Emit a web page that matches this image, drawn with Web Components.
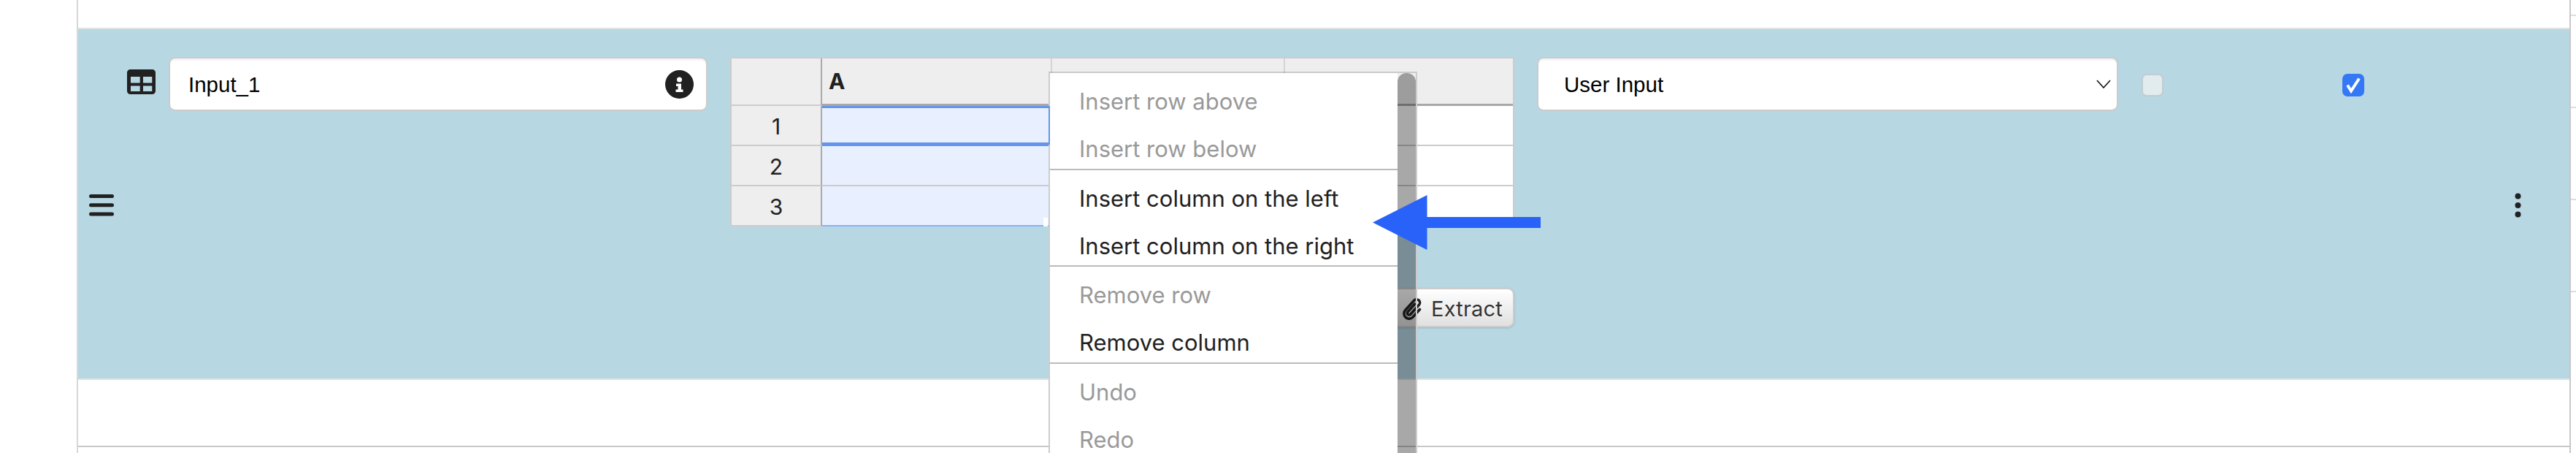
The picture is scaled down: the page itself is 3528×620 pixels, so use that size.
<!DOCTYPE html>
<html>
<head>
<meta charset="utf-8">
<title>Input row</title>
<style>
  html, body { margin: 0; height: 620px; overflow: hidden; background: #fff; }
</style>
</head>
<body>
<app-page>
  <data-row>
    <text-box slot="name" style="width:738px;--pl:25px;--pr:17px">Input_1
      <svg slot="after" width="39" height="39" viewBox="0 0 39 39"><path fill="#212121" fill-rule="evenodd" d="M19.5 0a19.5 19.5 0 1 1 0 39a19.5 19.5 0 1 1 0-39zM19.5 9.5a3.5 3.5 0 1 0 0 7a3.5 3.5 0 1 0 0-7zM15 18.5v3.5h2.5v4.5H14.500v3.500h10v-3.500h-2.500v-8z"/></svg>
    </text-box>
    <sheet-table slot="sheet"></sheet-table>
    <text-box slot="type" style="width:796px;--pl:35px;--pr:8px">User Input
      <svg slot="after" width="20" height="12" viewBox="0 0 20 12"><path d="M1 1l9 10l9-10" fill="none" stroke="#111" stroke-width="1.600"/></svg>
    </text-box>
  </data-row>
</app-page>
<context-menu>
  <menu-group>
    <menu-item disabled>Insert row above</menu-item>
    <menu-item disabled>Insert row below</menu-item>
  </menu-group>
  <menu-group>
    <menu-item>Insert column on the left</menu-item>
    <menu-item>Insert column on the right</menu-item>
  </menu-group>
  <menu-group>
    <menu-item disabled>Remove row</menu-item>
    <menu-item>Remove column</menu-item>
  </menu-group>
  <menu-group>
    <menu-item disabled>Undo</menu-item>
    <menu-item disabled>Redo</menu-item>
  </menu-group>
</context-menu>
<pointer-arrow></pointer-arrow>

<script>
class AppPage extends HTMLElement {
  constructor() {
    super();
    const shadow = this.attachShadow({ mode: "open" });
    shadow.innerHTML = `
      <style>
        :host { display: flex; height: 620px; padding-left: 105px; box-sizing: border-box; }
        #board { width: 3416px; box-sizing: border-box; border-left: 2px solid #d8d8d8; border-right: 2px solid #c8c8c8; flex: none; }
        .top { height: 38px; border-bottom: 2px solid #dfe2e2; }
        .blank { height: 90px; border-top: 2px solid #e0e2e2; border-bottom: 2px solid #c8c8c8; }
        #gutter { flex: 1; padding-top: 20px; }
        #gutter div { height: 124px; border-top: 2px solid #ddd; }
      </style>
      <div id="board">
        <div class="top"></div>
        <slot></slot>
        <div class="blank"></div>
      </div>
      <div id="gutter"><div></div><div></div><div></div><div></div></div>
    `;
  }
}

class DataRow extends HTMLElement {
  constructor() {
    super();
    const shadow = this.attachShadow({ mode: "open" });
    shadow.innerHTML = `
      <style>
        :host { display: flex; height: 478px; box-sizing: border-box; padding-top: 38px; background: #b7d7e3; align-items: flex-start; }
        .handle { flex: none; width: 67px; align-self: center; padding-left: 15px; box-sizing: border-box; margin-top: -35px; line-height: 0; }
        .kind { flex: none; margin: 17px 18px 0 0; line-height: 0; }
        .gap { flex: none; width: 31px; }
        .check { margin: 23px 0 0 32px; }
        .check + .check { margin-left: 245px; }
        .more { align-self: center; margin: -35px 0 0 206px; line-height: 0; }
        svg { display: block; }
      </style>
      <div class="handle">
        <svg width="34" height="30" viewBox="0 0 34 30" fill="#212121">
          <rect y="0" width="34" height="5" rx="2.500"/><rect y="12.300" width="34" height="5" rx="2.500"/><rect y="24.600" width="34" height="5" rx="2.500"/>
        </svg>
      </div>
      <div class="kind">
        <svg width="39" height="34" viewBox="0 0 39 34"><path fill="#212121" fill-rule="evenodd" d="M4.500 0h30a4.500 4.500 0 0 1 4.500 4.500v25a4.500 4.500 0 0 1-4.500 4.500h-30a4.500 4.500 0 0 1-4.500-4.500v-25a4.500 4.500 0 0 1 4.500-4.500zM5 10v8.500h12.700v-8.500zM22 10v8.500h12.300v-8.500zM5 22.500v7.500h12.700v-7.500zM22 22.500v7.500h12.300v-7.500z"/></svg>
      </div>
      <slot name="name"></slot>
      <div class="gap"></div>
      <slot name="sheet"></slot>
      <div class="gap"></div>
      <slot name="type"></slot>
      <check-box class="check"></check-box>
      <check-box class="check" checked></check-box>
      <div class="more">
        <svg width="9" height="34" viewBox="0 0 9 34" fill="#212121"><circle cx="4.500" cy="4.500" r="4"/><circle cx="4.500" cy="17" r="4"/><circle cx="4.500" cy="29.500" r="4"/></svg>
      </div>
    `;
  }
}

class TextBox extends HTMLElement {
  constructor() {
    super();
    const shadow = this.attachShadow({ mode: "open" });
    shadow.innerHTML = `
      <style>
        :host {
          display: flex; flex: none; align-items: center; justify-content: space-between;
          box-sizing: border-box; height: 74px; padding: 0 var(--pr) 0 var(--pl);
          background: #fff; border: 2px solid #cbcbcb; border-radius: 9px;
          box-shadow: inset 0 3px 3px -1px rgba(0,0,0,.07);
          font: 29.500px "Liberation Sans", Arial, sans-serif; color: #000; white-space: nowrap;
        }
        span { padding-top: 1px; }
      </style>
      <span><slot></slot></span>
      <slot name="after"></slot>
    `;
  }
}

class CheckBox extends HTMLElement {
  constructor() {
    super();
    const shadow = this.attachShadow({ mode: "open" });
    const tick = this.hasAttribute("checked")
      ? `<svg width="30" height="31" viewBox="0 0 30 31"><path d="M7 15.500l5 8l11-17" fill="none" stroke="#fff" stroke-width="4"/></svg>`
      : "";
    shadow.innerHTML = `
      <style>
        :host { display: block; flex: none; width: 30px; height: 31px; box-sizing: border-box; border-radius: 7px; }
        :host(:not([checked])) { background: #e2ecef; border: 2px solid #c2cdd1; }
        :host([checked]) { background: #3478f6; }
        svg { display: block; }
      </style>
      ${tick}
    `;
  }
}

class SheetTable extends HTMLElement {
  constructor() {
    super();
    const shadow = this.attachShadow({ mode: "open" });
    const rows = [1, 2, 3].map((n) => `
      <div class="num">${n}</div>
      <div class="cell a a${n}"></div>
      <div class="cell"></div>
      <div class="cell"></div>
    `).join("");
    shadow.innerHTML = `
      <style>
        :host { display: flex; flex-direction: column; align-items: flex-end; flex: none; width: 1074px; font-family: Inter, "Liberation Sans", sans-serif; color: #212121; }
        #grid {
          display: grid; width: 100%; box-sizing: border-box;
          grid-template-columns: 124px 315px 319px 312px;
          grid-template-rows: 65px 55px 55px 55px;
          border: 2px solid #ccc; border-bottom: 0; background: #fff;
        }
        #grid > div { box-sizing: border-box; }
        .head { background: #eee; border-bottom: 3px solid #a8a8a8; border-right: 2px solid #d4d4d4; font-size: 30px; font-weight: 700; line-height: 36px; padding: 13px 0 0 9px; overflow: hidden; }
        .corner { background: #eee; border-bottom: 2px solid #ccc; border-right: 2px solid #aaa; }
        .head:nth-child(4) { border-right: 0; }
        .num { background: #eee; border-bottom: 2px solid #ccc; border-right: 2px solid #aaa; font-size: 30px; display: flex; align-items: center; justify-content: center; padding-top: 2px; }
        .cell { border-bottom: 2px solid #ccc; border-right: 2px solid #ccc; }
        .cell:nth-child(4n) { border-right: 0; }
        .a { background: #e8effe; }
        .a1 { border-top: 3px solid #6495ed; border-bottom: 5px solid #6495ed; }
        .a3 { border-bottom-color: #8ab0f5; position: relative; }
        .a3::after { content: ""; position: absolute; right: 4px; bottom: -2px; width: 6px; height: 12px; background: #fff; }
      </style>
      <div id="grid">
        <div class="corner"></div>
        <div class="head">A</div>
        <div class="head">B</div>
        <div class="head">C</div>
        ${rows}
      </div>
      <extract-button></extract-button>
    `;
  }
}

class ExtractButton extends HTMLElement {
  constructor() {
    super();
    const shadow = this.attachShadow({ mode: "open" });
    shadow.innerHTML = `
      <style>
        :host {
          display: flex; align-items: center; gap: 9px; box-sizing: border-box;
          height: 54px; margin-top: 84px; padding: 0 14px 0 16px;
          background: linear-gradient(#fff, #e0e0e0);
          border: 2px solid #ccc; border-radius: 9px; box-shadow: 0 1px 3px rgba(0,0,0,.15);
          font: 29px Inter, "Liberation Sans", sans-serif; letter-spacing: .2px; color: #333; text-shadow: 0 1px 0 #fff;
        }
        svg { display: block; flex: none; }
        span { padding-top: 2px; }
      </style>
      <svg width="31" height="33" viewBox="0 0 31 33">
        <g transform="rotate(42 15.500 16.500)" fill="none" stroke="#222" stroke-width="3.600" stroke-linecap="round">
          <path d="M13.500 10V24.500a2.500 2.500 0 0 0 5 0V7a4.500 4.500 0 0 0-9 0V25a7 7 0 0 0 14 0V11" transform="translate(0 1)"/>
        </g>
      </svg>
      <span>Extract</span>
    `;
  }
}

class ContextMenu extends HTMLElement {
  constructor() {
    super();
    const shadow = this.attachShadow({ mode: "open" });
    shadow.innerHTML = `
      <style>
        :host {
          position: absolute; left: 1436px; top: 98px; width: 505px; height: 522px; box-sizing: border-box;
          display: flex; border: 2px solid #ccc; border-bottom: 0; border-top-color: rgba(0,0,0,.15);
          background-clip: padding-box;
          font: 31px Inter, "Liberation Sans", sans-serif;
        }
        :host::before { content: ""; position: absolute; left: -2px; top: 45px; width: 2px; height: 53px; background: #6495ed; }
        #list { width: 476px; flex: none; background: #fff; overflow: hidden; }
        #thumb { flex: 1; background: rgba(0,0,0,.34); border-radius: 12px 12px 0 0; }
      </style>
      <div id="list"><slot></slot></div>
      <div id="thumb"></div>
    `;
  }
}

class MenuGroup extends HTMLElement {
  constructor() {
    super();
    const shadow = this.attachShadow({ mode: "open" });
    shadow.innerHTML = `
      <style>
        :host { display: block; height: 132.500px; box-sizing: border-box; padding-top: 6px; border-bottom: 2px solid #bbb; }
        :host(:last-child) { border-bottom: 0; }
      </style>
      <slot></slot>
    `;
  }
}

class MenuItem extends HTMLElement {
  constructor() {
    super();
    const shadow = this.attachShadow({ mode: "open" });
    shadow.innerHTML = `
      <style>
        :host { display: block; height: 65px; line-height: 65px; padding-left: 40px; color: #212121; white-space: nowrap; }
        :host([disabled]) { color: #999; }
      </style>
      <slot></slot>
    `;
  }
}

class PointerArrow extends HTMLElement {
  constructor() {
    super();
    const shadow = this.attachShadow({ mode: "open" });
    shadow.innerHTML = `
      <style>
        :host { position: absolute; left: 1880px; top: 267px; line-height: 0; }
      </style>
      <svg width="230" height="75" viewBox="0 0 230 75"><path fill="#2962f8" d="M0 37.500L74.500 0V30H230V45H74.500V75z"/></svg>
    `;
  }
}

customElements.define("app-page", AppPage);
customElements.define("data-row", DataRow);
customElements.define("text-box", TextBox);
customElements.define("check-box", CheckBox);
customElements.define("sheet-table", SheetTable);
customElements.define("extract-button", ExtractButton);
customElements.define("context-menu", ContextMenu);
customElements.define("menu-group", MenuGroup);
customElements.define("menu-item", MenuItem);
customElements.define("pointer-arrow", PointerArrow);
</script>
</body>
</html>
